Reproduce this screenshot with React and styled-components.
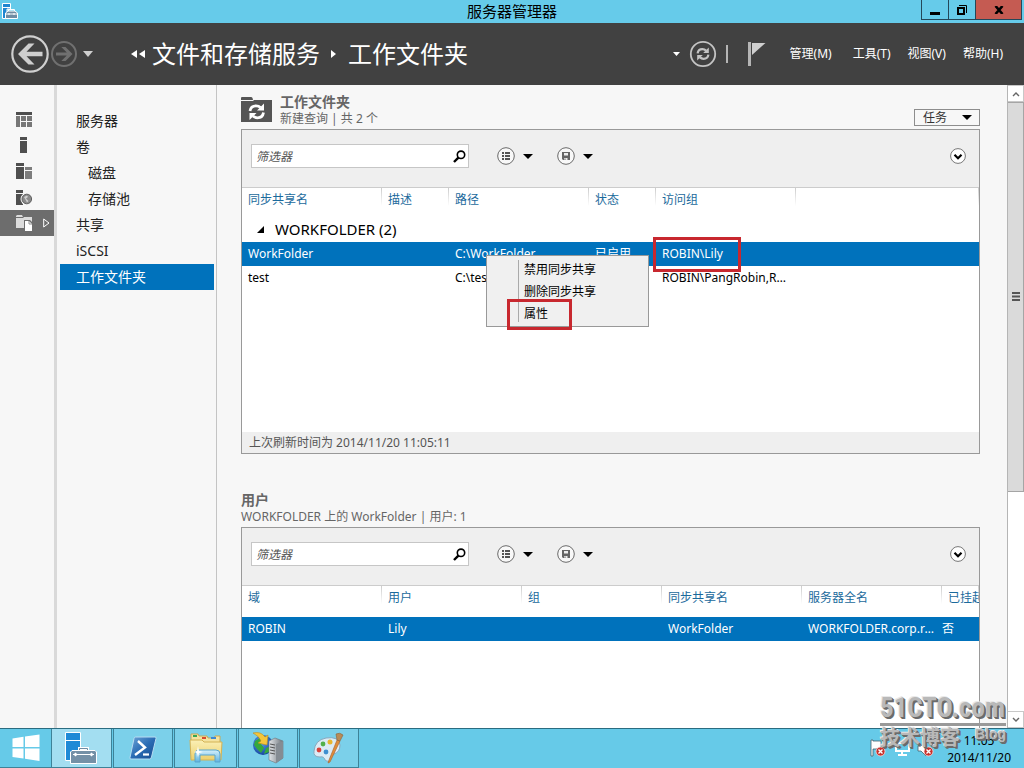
import React from 'react'
import styled, { createGlobalStyle, css } from 'styled-components';

const navItems = [
  { label: '服务器' },
  { label: '卷' },
  { label: '磁盘', sub: true },
  { label: '存储池', sub: true },
  { label: '共享' },
  { label: 'iSCSI' },
  { label: '工作文件夹', active: true },
];

const shareColumns = [
  { title: '同步共享名', width: 140 },
  { title: '描述', width: 67 },
  { title: '路径', width: 140 },
  { title: '状态', width: 67 },
  { title: '访问组', width: 140 },
  { title: '' },
];

const shares = [
  { name: 'WorkFolder', desc: '', path: 'C:\\WorkFolder', state: '已启用', group: 'ROBIN\\Lily', selected: true },
  { name: 'test', desc: '', path: 'C:\\test', state: '已启用', group: 'ROBIN\\PangRobin,ROBIN\\Lily' },
];

const userColumns = [
  { title: '域', width: 140 },
  { title: '用户', width: 140 },
  { title: '组', width: 140 },
  { title: '同步共享名', width: 140 },
  { title: '服务器全名', width: 140 },
  { title: '已挂起' },
];

const users = [
  { domain: 'ROBIN', user: 'Lily', group: '', share: 'WorkFolder', server: 'WORKFOLDER.corp.robin.com', suspended: '否' },
];

const ServerManagerIcon = () => (
  <svg width="16" height="16" viewBox="0 0 16 16" aria-hidden="true">
    <path d="M0.5 0.5H8.5V6H5V15.5H0.5z" fill="#1f86d0" stroke="#fff" />
    <path d="M1 4.5H8" stroke="#fff" />
    <path d="M6.5 8V6.5H12.5V8" fill="none" stroke="#fff" />
    <path d="M6 8H13L15.5 10V15.5H3.5V10z" fill="#6f8ca3" stroke="#fff" />
    <path d="M4 11H15M7 10V12M12 10V12" stroke="#fff" fill="none" />
  </svg>
)

const ServerManagerLargeIcon = () => (
  <svg width="33" height="33" viewBox="0 0 33 33">
    <path d="M0.5 0.5H15.5V28.5H0.5z" fill="#1f8ad6" stroke="#fff" />
    <path d="M1 8.5H15" stroke="#fff" />
    <path d="M14.5 18V16.5H22.5V18" fill="none" stroke="#fff" strokeWidth="3" />
    <path d="M14.5 19V16.5H22.5V19" fill="none" stroke="#6f8ca3" />
    <path d="M7 18.5H30L31.5 20V31.5H5.5V20z" fill="#7490a6" stroke="#fff" />
    <path d="M8 22.5H29" stroke="#fff" />
    <path d="M8.5 22.5L10.5 20.5L12.5 22.5L10.5 24.5zM24.5 22.5L26.5 20.5L28.5 22.5L26.5 24.5z" fill="#fff" />
  </svg>
)

const BackIcon = () => (
  <svg width="40" height="40" viewBox="0 0 40 40">
    <circle cx="20" cy="20" r="17.7" fill="none" stroke="#cfcfcf" strokeWidth="2.2" />
    <path d="M8 20L18.5 9.5H24.5L16.5 17.8H32.5V22.2H16.5L24.5 30.5H18.5z" fill="#cfcfcf" />
  </svg>
)

const ForwardIcon = () => (
  <svg width="28" height="28" viewBox="0 0 28 28">
    <circle cx="14" cy="14" r="12" fill="none" stroke="#707070" strokeWidth="2" />
    <path d="M22.5 14L15.5 7H11.3L16.8 12.5H6V15.5H16.8L11.3 21H15.5z" fill="#707070" />
  </svg>
)

const Caret = ({ width = 10, height = 5, color = '#000' }) => (
  <svg width={width} height={height} viewBox="0 0 10 5" preserveAspectRatio="none" aria-hidden="true">
    <path d="M0 0H10L5 5z" fill={color} />
  </svg>
)

const SyncArrows = ({ color }) => (
  <g fill="none" stroke={color} strokeWidth="2.2">
    <path d="M1.6 6.4Q2.2 2.2 6.4 2.2Q8.6 2.2 10 3.6" />
    <path d="M12.4 7.6Q11.8 11.8 7.6 11.8Q5.4 11.8 4 10.4" />
    <path d="M12.8 0.4V6H7.2z" fill={color} stroke="none" />
    <path d="M1.2 13.6V8H6.8z" fill={color} stroke="none" />
  </g>
)

const RefreshIcon = () => (
  <svg width="28" height="28" viewBox="0 0 28 28">
    <circle cx="14" cy="14" r="12.2" fill="none" stroke="#c4c4c4" strokeWidth="1.8" />
    <g transform="translate(7 7)"><SyncArrows color="#c4c4c4" /></g>
  </svg>
)

const FlagIcon = () => (
  <svg width="18" height="24" viewBox="0 0 18 24">
    <path d="M0 0H3V24H0z" fill="#b5b5b5" />
    <path d="M4 1H17.5L4 13z" fill="#cfcfcf" />
  </svg>
)

const FolderSyncIcon = () => (
  <svg width="31" height="25" viewBox="0 0 31 25" aria-hidden="true">
    <path d="M0 3V1Q0 0 1 0H10Q11 0 11.5 1L12 3z" fill="#555" />
    <path d="M0 4H12L13 3H31V25H0z" fill="#555" />
    <g transform="translate(7 6) scale(1.25)"><SyncArrows color="#fff" /></g>
  </svg>
)

const SearchIcon = () => (
  <svg width="13" height="13" viewBox="0 0 13 13">
    <circle cx="8" cy="4.8" r="3.7" fill="none" stroke="#000" strokeWidth="1.6" />
    <path d="M5.4 7.6L1 12" stroke="#000" strokeWidth="2.4" />
  </svg>
)

const ListIcon = () => (
  <svg width="18" height="18" viewBox="0 0 18 18">
    <circle cx="9" cy="9" r="8.3" fill="#f8f8f8" stroke="#6a6a6a" />
    <path d="M5 6H7M5 9H7M5 12H7M8 6H13M8 9H13M8 12H13" stroke="#555" strokeWidth="2" />
  </svg>
)

const SaveIcon = () => (
  <svg width="18" height="18" viewBox="0 0 18 18">
    <circle cx="9" cy="9" r="8.3" fill="#f8f8f8" stroke="#6a6a6a" />
    <path d="M5 5H13V13H6L5 12z" fill="#666" />
    <path d="M7 6H11V8.5H7z" fill="#eee" />
    <path d="M7 11H10.5V13H7z" fill="#eee" />
    <path d="M8 11.5V13" stroke="#666" />
  </svg>
)

const ExpandIcon = () => (
  <svg width="16" height="16" viewBox="0 0 16 16">
    <circle cx="8" cy="8" r="7.4" fill="#fff" stroke="#777" />
    <path d="M4.5 6.8L8 10.2L11.5 6.8" fill="none" stroke="#000" strokeWidth="2.2" />
  </svg>
)

const DashboardIcon = () => (
  <svg width="16" height="15" viewBox="0 0 16 15">
    <path d="M0 0H16V3H0z" fill="#4f4f4f" />
    <path d="M0 4H4V15H0zM5 4H10V9H5zM11 4H16V9H11zM5 10H10V15H5zM11 10H16V15H11z" fill="#777" />
  </svg>
)

const LocalServerIcon = () => (
  <svg width="16" height="16" viewBox="0 0 16 16">
    <path d="M4 0H11V3H4zM4 4H11V16H4z" fill="#4f4f4f" />
  </svg>
)

const AllServersIcon = () => (
  <svg width="16" height="16" viewBox="0 0 16 16">
    <path d="M0 0H8V3H0zM0 4H8V16H0z" fill="#4f4f4f" />
    <path d="M9 4H16V7H9zM9 8H16V16H9z" fill="#7d7d7d" />
  </svg>
)

const WebServerIcon = () => (
  <svg width="16" height="15" viewBox="0 0 16 15">
    <path d="M0 0H7V3H0zM0 4H7V15H0z" fill="#4f4f4f" />
    <circle cx="10.5" cy="9" r="6" fill="#f7f7f7" />
    <circle cx="10.8" cy="9" r="4.8" fill="#8b8b8b" stroke="#606060" />
    <path d="M8 7L11 5.5L12 7L10 8.5L12.5 11L11 12.5L10 10.5z" fill="#cfcfcf" />
  </svg>
)

const StorageIcon = () => (
  <svg width="16" height="16" viewBox="0 0 16 16">
    <path d="M0 2V1L1 0H6L7 2zM0 3H7L8 2H16V13H0z" fill="#dcdcdc" />
    <path d="M8 5H14L17 8V17H8z" fill="#6d6d6d" />
    <path d="M9 6H13L16 9V16H9z" fill="#fff" />
    <path d="M13 6V9H16" fill="none" stroke="#8c8c8c" />
  </svg>
)

const WindowsIcon = () => (
  <svg width="28" height="28" viewBox="0 0 28 28">
    <path d="M0.5 4.5L11.5 2.8V13H0.5zM13 2.6L27.5 0.5V13H13zM0.5 14.5H11.5V24.5L0.5 23zM13 14.5H27.5V27L13 24.8z" fill="#fff" />
  </svg>
)

const PowerShellIcon = () => (
  <svg width="28" height="24" viewBox="0 0 28 24">
    <defs>
      <linearGradient id="ps" x1="0" y1="0" x2="1" y2="1">
        <stop offset="0" stopColor="#6fa5d8" />
        <stop offset="0.5" stopColor="#2a6cb4" />
        <stop offset="1" stopColor="#174a8c" />
      </linearGradient>
    </defs>
    <path d="M6.5 1H26Q27.5 1 27 2.5L22.5 21Q22 23 20.5 23H2Q0.5 23 1 21.5L5 2.5Q5.3 1 6.5 1z" fill="url(#ps)" stroke="#b8dcf2" />
    <path d="M9 5L16 11.5L6 19" fill="none" stroke="#fff" strokeWidth="2.4" />
    <path d="M14 18.5H20" stroke="#fff" strokeWidth="2.2" />
  </svg>
)

const ExplorerIcon = () => (
  <svg width="34" height="30" viewBox="0 0 34 30">
    <defs>
      <linearGradient id="fold" x1="0" y1="0" x2="0" y2="1">
        <stop offset="0" stopColor="#fbf0b6" />
        <stop offset="1" stopColor="#ecd06e" />
      </linearGradient>
      <linearGradient id="stand" x1="0" y1="0" x2="0" y2="1">
        <stop offset="0" stopColor="#d6f0fb" />
        <stop offset="1" stopColor="#5fb4e0" />
      </linearGradient>
    </defs>
    <path d="M2 1H9L10 3H18L19 5H25L26 3H31V12H2z" fill="#f4e3a0" stroke="#c8a957" />
    <path d="M4 2H8V4H4z" fill="#35a853" />
    <path d="M13 4H17V6H13z" fill="#d84a2f" />
    <path d="M22 4H27V6H22z" fill="#4088d0" />
    <path d="M1 7H13L15 9H33L32 27H2z" fill="url(#fold)" stroke="#d4b255" />
    <path d="M6 29V21Q6 17 10 17H27Q31 17 31 21V29H26V22H11V29z" fill="url(#stand)" stroke="#5aa5cc" />
    <path d="M9 13L10 18L14 19L10 20L9 24L8 20L5 19L8 18z" fill="#fff" />
  </svg>
)

const IisIcon = () => (
  <svg width="32" height="32" viewBox="0 0 32 32">
    <defs>
      <radialGradient id="globe" cx="0.4" cy="0.35" r="0.7">
        <stop offset="0" stopColor="#5aa4ee" />
        <stop offset="1" stopColor="#123f9c" />
      </radialGradient>
      <linearGradient id="tower" x1="0" y1="0" x2="1" y2="0">
        <stop offset="0" stopColor="#e2e5e8" />
        <stop offset="1" stopColor="#6e757c" />
      </linearGradient>
    </defs>
    <circle cx="11" cy="13" r="10" fill="url(#globe)" />
    <path d="M3 9L8 6L12 9L9 12L12 16L9 21L5 17L2 13zM14 16L19 14L17 20L12 22z" fill="#35a83e" />
    <path d="M1 1Q9 -1 13 5L16 3L15 13L6 11L9 9Q7 4 1 1z" fill="#f5c63c" stroke="#c28d16" strokeWidth="0.6" />
    <path d="M17 9L23 6L31 9V26L24 31L17 28z" fill="url(#tower)" stroke="#6c7379" strokeWidth="0.6" />
    <path d="M24 12L31 9V26L24 31z" fill="#858c93" />
    <path d="M18 12L23 13M18 15L23 16M18 18L23 19M18 21L23 22" stroke="#555" />
  </svg>
)

const PaintIcon = () => (
  <svg width="34" height="32" viewBox="0 0 34 32">
    <path d="M2 19Q3 8 14 6Q27 4 28 13Q28 20 22 22Q18 23 19 27Q17 31 13 28Q12 24 8 25Q1 25 2 19z" fill="#dcebf5" stroke="#8aa9be" />
    <circle cx="7" cy="18" r="2.4" fill="#d9423a" />
    <circle cx="11" cy="12" r="2.4" fill="#52b04b" />
    <circle cx="18" cy="10" r="2.5" fill="#e8b62e" />
    <circle cx="14" cy="20" r="2.4" fill="#3f8fd0" />
    <path d="M28 9L18 30L16 31L17 28L25 8z" fill="#e08c3a" stroke="#a8622a" strokeWidth="0.6" />
    <path d="M24 2Q28 0 31 3L28 9L25 8z" fill="#b98b57" stroke="#8a6238" strokeWidth="0.6" />
  </svg>
)

const TrayIcons = () => (
  <svg width="66" height="20" viewBox="0 0 66 20" aria-hidden="true">
    <path d="M1 1V17H3V10H11V2H3V1z" fill="#fff" stroke="#46606c" strokeWidth="0.8" />
    <path d="M26 4H39V12H26zM32 12V15M28 16H37" fill="#66cae8" stroke="#fff" strokeWidth="2" />
    <path d="M48 7H51L56 2V17L51 12H48z" fill="#fff" stroke="#46606c" strokeWidth="0.8" />
    {[10.5, 58.5].map(x => (
      <g key={x}>
        <circle cx={x} cy="12.5" r="4.5" fill="#c9302c" stroke="#f5dada" strokeWidth="0.8" />
        <path d={`M${x - 2} 10.5L${x + 2} 14.5M${x + 2} 10.5L${x - 2} 14.5`} stroke="#fff" strokeWidth="1.4" />
      </g>
    ))}
  </svg>
)

const railItems = [
  { label: '仪表板', Icon: DashboardIcon },
  { label: '本地服务器', Icon: LocalServerIcon },
  { label: '所有服务器', Icon: AllServersIcon },
  { label: 'IIS', Icon: WebServerIcon },
  { label: '文件和存储服务', Icon: StorageIcon, active: true },
];

const Toolbar = ({ id }) => (
  <ToolbarRow>
    <FilterBox>
      <FilterInput id={id} aria-label="筛选器" placeholder="筛选器" />
      <IconButton aria-label="搜索"><SearchIcon /></IconButton>
    </FilterBox>
    <DropButton aria-label="查询"><ListIcon /><Caret /></DropButton>
    <DropButton aria-label="保存"><SaveIcon /><Caret /></DropButton>
    <Spacer />
    <IconButton aria-label="展开"><ExpandIcon /></IconButton>
  </ToolbarRow>
)

const TableHead = ({ columns }) => (
  <>
    <colgroup>
      {columns.map(col => <Col key={col.title} $width={col.width} />)}
    </colgroup>
    <thead>
      <tr>
        {columns.map(col => <Th key={col.title} scope="col">{col.title}</Th>)}
      </tr>
    </thead>
  </>
)

const ShareTable = () => (
  <Table>
    <TableHead columns={shareColumns} />
    <tbody>
      <tr>
        <GroupCell colSpan={shareColumns.length}>
          <GroupLabel>
            <svg width="7" height="7" viewBox="0 0 7 7" aria-hidden="true"><path d="M7 0V7H0z" /></svg>
            WORKFOLDER (2)
          </GroupLabel>
        </GroupCell>
      </tr>
      {shares.map(share => (
        <Row key={share.name} $selected={share.selected}>
          <Td>{share.name}</Td>
          <Td>{share.desc}</Td>
          <Td>{share.path}</Td>
          <Td>{share.state}</Td>
          <Td>
            {share.group}
            {share.selected && <GroupMark />}
          </Td>
          <Td />
        </Row>
      ))}
    </tbody>
  </Table>
)

const UserTable = () => (
  <Table>
    <TableHead columns={userColumns} />
    <tbody>
      {users.map(item => (
        <Row key={item.user} $selected>
          <Td>{item.domain}</Td>
          <Td>{item.user}</Td>
          <Td>{item.group}</Td>
          <Td>{item.share}</Td>
          <Td>{item.server}</Td>
          <Td $flush>{item.suspended}</Td>
        </Row>
      ))}
    </tbody>
  </Table>
)

const App = () => {
  return (
    <>
      <GlobalStyle />
      <Screen>
        <TitleBar>
          <TitleIcon><ServerManagerIcon /></TitleIcon>
          <Title>服务器管理器</Title>
          <WindowButtons>
            <WindowButton aria-label="最小化">
              <svg width="10" height="13" viewBox="0 0 10 13"><path d="M0 9H10V12H0z" /></svg>
            </WindowButton>
            <WindowButton aria-label="还原">
              <svg width="10" height="10" viewBox="0 0 10 10">
                <path d="M1 3H7V9H1z" fill="none" stroke="#000" strokeWidth="2" />
                <path d="M2 0.5H9.5V8" fill="none" stroke="#000" />
              </svg>
            </WindowButton>
            <WindowButton aria-label="关闭" $close>
              <svg width="10" height="8" viewBox="0 0 10 8">
                <path d="M1.5 0L8.5 8M8.5 0L1.5 8" stroke="#000" strokeWidth="2.6" />
              </svg>
            </WindowButton>
          </WindowButtons>
        </TitleBar>

        <Header>
          <IconButton aria-label="后退"><BackIcon /></IconButton>
          <IconButton aria-label="前进"><ForwardIcon /></IconButton>
          <HistoryButton aria-label="历史记录"><Caret height={6} color="#cfcfcf" /></HistoryButton>
          <Breadcrumb aria-label="位置">
            <svg width="14" height="8" viewBox="0 0 14 8" aria-hidden="true"><path d="M6 0V8L0 4zM14 0V8L8 4z" fill="#fff" /></svg>
            <Crumb href="#storage">文件和存储服务</Crumb>
            <CrumbArrow width="5" height="8" viewBox="0 0 5 8" aria-hidden="true"><path d="M0 0V8L5 4z" fill="#fff" /></CrumbArrow>
            <Crumb href="#workfolders">工作文件夹</Crumb>
          </Breadcrumb>
          <HeaderTools>
            <IconButton aria-label="更多"><Caret width={7} height={4} color="#fff" /></IconButton>
            <IconButton aria-label="刷新"><RefreshIcon /></IconButton>
            <Divider />
            <IconButton aria-label="通知"><FlagIcon /></IconButton>
          </HeaderTools>
          <Menu>
            <MenuButton $wide>管理(M)</MenuButton>
            <MenuButton>工具(T)</MenuButton>
            <MenuButton>视图(V)</MenuButton>
            <MenuButton>帮助(H)</MenuButton>
          </Menu>
        </Header>

        <Body>
          <Rail>
            {railItems.map(({ label, Icon, active }) => (
              <RailButton key={label} aria-label={label} $active={active}>
                <Icon />
                {active && (
                  <svg width="7" height="10" viewBox="0 0 7 10"><path d="M0.7 1L6 5L0.7 9z" fill="none" stroke="#fff" /></svg>
                )}
              </RailButton>
            ))}
          </Rail>
          <Nav>
            {navItems.map(item => (
              <NavLink key={item.label} href={`#${item.label}`} $sub={item.sub} $active={item.active}>
                {item.label}
              </NavLink>
            ))}
          </Nav>

          <Main>
            <Section>
              <SectionHeader>
                <FolderSyncIcon />
                <SectionTitles>
                  <SectionTitle>工作文件夹</SectionTitle>
                  <SectionNote>新建查询 | 共 2 个</SectionNote>
                </SectionTitles>
                <TaskButton>任务<Caret /></TaskButton>
              </SectionHeader>
              <Panel>
                <Toolbar id="share-filter" />
                <ShareArea><ShareTable /></ShareArea>
                <PanelFooter>上次刷新时间为 2014/11/20 11:05:11</PanelFooter>
                <ContextMenu role="menu">
                  <ContextItem role="menuitem">禁用同步共享</ContextItem>
                  <ContextItem role="menuitem">删除同步共享</ContextItem>
                  <ContextItem role="menuitem">属性<ItemMark /></ContextItem>
                </ContextMenu>
              </Panel>
            </Section>

            <Section $fill>
              <SectionHeader>
                <SectionTitles>
                  <SectionTitle>用户</SectionTitle>
                  <SectionNote>WORKFOLDER 上的 WorkFolder | 用户: 1</SectionNote>
                </SectionTitles>
              </SectionHeader>
              <Panel $fill>
                <Toolbar id="user-filter" />
                <UserTable />
              </Panel>
            </Section>
          </Main>

          <ScrollBar>
            <ScrollButton aria-label="向上滚动">
              <svg width="8" height="6" viewBox="0 0 8 6"><path d="M1 5L4 2L7 5" fill="none" stroke="#666" strokeWidth="1.4" /></svg>
            </ScrollButton>
            <ScrollTrack>
              <ScrollThumb>
                <svg width="8" height="9" viewBox="0 0 8 9"><path d="M0 1H8M0 4.5H8M0 8H8" stroke="#555" strokeWidth="2" /></svg>
              </ScrollThumb>
            </ScrollTrack>
            <ScrollButton aria-label="向下滚动">
              <svg width="8" height="6" viewBox="0 0 8 6"><path d="M1 1L4 4L7 1" fill="none" stroke="#666" strokeWidth="1.4" /></svg>
            </ScrollButton>
          </ScrollBar>
        </Body>

        <TaskBar>
          <TaskBarButton aria-label="开始" $width={51} $plain><WindowsIcon /></TaskBarButton>
          <TaskBarButton aria-label="服务器管理器" $width={61} $active><ServerManagerLargeIcon /></TaskBarButton>
          <TaskBarButton aria-label="PowerShell" $width={60}><PowerShellIcon /></TaskBarButton>
          <TaskBarButton aria-label="文件资源管理器" $width={63}><ExplorerIcon /></TaskBarButton>
          <TaskBarButton aria-label="IIS" $width={60}><IisIcon /></TaskBarButton>
          <TaskBarButton aria-label="画图" $width={60}><PaintIcon /></TaskBarButton>
          <Spacer />
          <TrayIcons />
          <Clock>
            <span>11:05</span>
            <span>2014/11/20</span>
          </Clock>
        </TaskBar>

        <Watermark>
          <WatermarkName>51CTO.com</WatermarkName>
          <WatermarkNote>
            <span>技术博客</span>
            <WatermarkBlog>Blog</WatermarkBlog>
          </WatermarkNote>
        </Watermark>
      </Screen>
    </>
  )
}

export default App;

const GlobalStyle = createGlobalStyle`
  * {
    box-sizing: border-box;
  }

  body {
    margin: 0;
    overflow: hidden;
  }

  body, button, input {
    font-family: "Noto Sans", "Noto Sans CJK SC", sans-serif;
    font-size: 12px;
  }

  button {
    padding: 0;
    border: 0;
    background: none;
    color: inherit;
  }

  svg {
    display: block;
    flex: none;
  }
`;

const Screen = styled.div`
  position: relative;
  display: flex;
  flex-direction: column;
  height: 100vh;
  background: #f7f7f7;
`;

const Spacer = styled.div`
  flex: 1;
`;

const TitleBar = styled.header`
  display: grid;
  grid-template-columns: 1fr auto 1fr;
  height: 23px;
  background: #66cbea;
`;

const TitleIcon = styled.div`
  padding: 3px 2px;
`;

const Title = styled.h1`
  margin: 0;
  font-size: 15px;
  font-weight: 400;
  line-height: 22px;
`;

const WindowButtons = styled.div`
  display: flex;
  justify-content: flex-end;
  align-items: flex-start;
  padding-right: 2px;
`;

const WindowButton = styled.button`
  display: flex;
  align-items: center;
  justify-content: center;
  width: ${({ $close }) => ($close ? 47 : 27)}px;
  height: 20px;
  border: 1px solid #24485a;
  border-top: 0;
  border-right-width: ${({ $close }) => ($close ? 1 : 0)}px;
  background: ${({ $close }) => ($close ? '#c55b52' : 'transparent')};
`;

const Header = styled.div`
  display: flex;
  align-items: center;
  height: 62px;
  padding: 0 21px 0 10px;
  background: #414141;
  color: #fff;
`;

const IconButton = styled.button`
  display: flex;
  align-items: center;
  justify-content: center;
`;

const HistoryButton = styled(IconButton)`
  margin: 0 38px 0 5px;
`;

const Breadcrumb = styled.nav`
  display: flex;
  align-items: center;
  flex: 1;
  gap: 7px;
`;

const Crumb = styled.a`
  color: #fff;
  font-size: 24px;
  line-height: 32px;
  text-decoration: none;
  white-space: nowrap;
`;

const CrumbArrow = styled.svg`
  margin: 0 5px 0 4px;
`;

const HeaderTools = styled.div`
  display: flex;
  align-items: center;
  gap: 9px;
  margin-right: 24px;
`;

const Divider = styled.div`
  width: 2px;
  height: 18px;
  margin-right: 11px;
  background: #b5b5b5;
`;

const Menu = styled.div`
  display: flex;
  gap: 17px;
`;

const MenuButton = styled.button`
  margin-right: ${({ $wide }) => ($wide ? 4 : 0)}px;
  line-height: 20px;
  white-space: nowrap;
`;

const Body = styled.div`
  display: flex;
  flex: 1;
  min-height: 0;
`;

const Rail = styled.nav`
  width: 57px;
  padding-top: 21px;
  border-right: 3px solid #d9d9d9;
`;

const RailButton = styled.button`
  display: flex;
  align-items: center;
  gap: 11px;
  width: 100%;
  height: 26px;
  padding-left: 16px;
  background: ${({ $active }) => ($active ? '#6d6d6d' : 'transparent')};
`;

const Nav = styled.nav`
  width: 160px;
  padding: 23px 2px 0 3px;
  border-right: 1px solid #c4c4c4;
`;

const NavLink = styled.a`
  display: block;
  padding-left: ${({ $sub }) => ($sub ? 28 : 16)}px;
  background: ${({ $active }) => ($active ? '#0072bc' : 'transparent')};
  color: ${({ $active }) => ($active ? '#fff' : '#222')};
  font-size: 14px;
  line-height: 26px;
  text-decoration: none;
`;

const Main = styled.main`
  display: flex;
  flex-direction: column;
  flex: 1;
  gap: 38px;
  min-width: 0;
  padding: 9px 27px 0 24px;
  overflow: hidden;
`;

const Section = styled.section`
  display: flex;
  flex-direction: column;
  flex: ${({ $fill }) => ($fill ? '1' : 'none')};
`;

const SectionHeader = styled.div`
  display: flex;
  align-items: flex-end;
  gap: 8px;
  padding-bottom: 1px;

  > svg {
    margin-bottom: 6px;
  }
`;

const SectionTitles = styled.div`
  flex: 1;
  color: #666;
`;

const SectionTitle = styled.h2`
  margin: 0;
  font-size: 14px;
  font-weight: 700;
  line-height: 16px;
`;

const SectionNote = styled.p`
  margin: 0;
  line-height: 18px;
`;

const TaskButton = styled.button`
  display: flex;
  align-items: center;
  justify-content: space-between;
  width: 66px;
  height: 17px;
  margin-bottom: 2px;
  padding: 0 7px 0 8px;
  border: 1px solid #8d8d8d;
  color: #333;
  line-height: 15px;
`;

const Panel = styled.div`
  position: relative;
  border: 1px solid #999;
  background: #fff;
  ${({ $fill }) => $fill && css`
    flex: 1;
    border-bottom: 0;
  `}
`;

const ToolbarRow = styled.div`
  display: flex;
  align-items: center;
  padding: 14px 13px 19px 9px;
  border-bottom: 1px solid #ccc;
  background: #efefef;
`;

const FilterBox = styled.div`
  display: flex;
  align-items: center;
  width: 218px;
  height: 24px;
  margin-right: 28px;
  padding-right: 2px;
  border: 1px solid #c6c6c6;
  background: #fff;
`;

const FilterInput = styled.input`
  flex: 1;
  min-width: 0;
  padding: 0 4px;
  border: 0;
  outline: 0;
  background: none;
  font-style: italic;

  &::placeholder {
    color: #555;
  }
`;

const DropButton = styled(IconButton)`
  gap: 8px;
  margin-right: 24px;
`;

const ShareArea = styled.div`
  height: 244px;
`;

const Table = styled.table`
  width: 100%;
  border-collapse: collapse;
  table-layout: fixed;
  text-align: left;
`;

const Col = styled.col`
  width: ${({ $width }) => ($width ? `${$width}px` : 'auto')};
`;

const Th = styled.th`
  height: 31px;
  padding: 3px 0 0 6px;
  overflow: hidden;
  background: linear-gradient(#ccc, #fff) right top / 1px 18px no-repeat;
  color: #1b6a9c;
  font-weight: 400;
  line-height: 18px;
  vertical-align: top;
  white-space: nowrap;
`;

const GroupCell = styled.td`
  height: 23px;
  padding: 0 0 3px 15px;
`;

const GroupLabel = styled.div`
  display: flex;
  align-items: center;
  gap: 11px;
  font-size: 15px;
  line-height: 20px;
`;

const Row = styled.tr`
  background: ${({ $selected }) => ($selected ? '#0072bc' : '#fff')};
  color: ${({ $selected }) => ($selected ? '#fff' : '#000')};
`;

const Td = styled.td`
  position: relative;
  height: 24px;
  padding: 0 4px 0 ${({ $flush }) => ($flush ? 0 : 6)}px;
  overflow: hidden;
  line-height: 24px;
  text-overflow: ellipsis;
  white-space: nowrap;

  &:has(span) {
    overflow: visible;
  }
`;

const markStyle = css`
  position: absolute;
  border: 3px solid #c8282f;
  pointer-events: none;
`;

const GroupMark = styled.span`
  ${markStyle}
  top: -5px;
  left: -3px;
  z-index: 1;
  width: 88px;
  height: 35px;
`;

const ItemMark = styled.span`
  ${markStyle}
  top: -4px;
  left: 20px;
  width: 65px;
  height: 31px;
`;

const PanelFooter = styled.div`
  padding: 0 7px;
  background: #efefef;
  color: #555;
  line-height: 21px;
`;

const ContextMenu = styled.div`
  position: absolute;
  top: 125px;
  left: 244px;
  width: 163px;
  padding: 3px 0 1px;
  border: 1px solid #999;
  background: linear-gradient(#aaa, #aaa) 31px 4px / 1px 62px no-repeat #f0f0f0;
`;

const ContextItem = styled.button`
  position: relative;
  display: block;
  width: 100%;
  padding-left: 37px;
  line-height: 22px;
  text-align: left;
`;

const ScrollBar = styled.div`
  display: flex;
  flex-direction: column;
  width: 17px;
  border-left: 1px solid #b5b5b5;
  background: #fff;
`;

const ScrollButton = styled(IconButton)`
  height: 17px;
  border: 1px solid #c8c8c8;
  border-left: 0;
`;

const ScrollTrack = styled.div`
  flex: 1;
`;

const ScrollThumb = styled.div`
  display: flex;
  align-items: center;
  justify-content: center;
  height: 64%;
  border: 1px solid #a5a5a5;
  border-left: 0;
  background: #dadada;
`;

const TaskBar = styled.footer`
  display: flex;
  align-items: center;
  height: 40px;
  padding-right: 13px;
  border-top: 1px solid #2b6c80;
  background: #66cae8;
`;

const TaskBarButton = styled.button`
  display: flex;
  align-items: center;
  justify-content: center;
  width: ${({ $width }) => $width}px;
  height: 39px;
  margin-right: ${({ $plain }) => ($plain ? 0 : 1)}px;
  border: 1px solid #3d8298;
  border-top: 0;
  border-left-width: ${({ $plain }) => ($plain ? 0 : 1)}px;
  border-right-width: ${({ $plain }) => ($plain ? 0 : 1)}px;
  background: ${({ $active, $plain }) => ($active ? '#a3def1' : $plain ? 'transparent' : '#7bd0ea')};
`;

const Clock = styled.time`
  display: flex;
  flex-direction: column;
  align-items: center;
  margin-left: 11px;
  line-height: 17px;
`;

const Watermark = styled.div`
  position: absolute;
  right: 18px;
  bottom: 18px;
  width: 126px;
  color: #b9b9b9;
  text-shadow: 1px 1px 0 #6b6b6b, 2px 2px 0 #6b6b6b, -1px -1px 0 #e8e8e8;
  pointer-events: none;
`;

const WatermarkName = styled.div`
  border-bottom: 3px solid #999;
  font-family: "Roboto Condensed", Roboto, sans-serif;
  font-size: 27px;
  font-weight: 700;
  line-height: 29px;
`;

const WatermarkNote = styled.div`
  display: flex;
  justify-content: space-between;
  font-size: 20px;
  font-weight: 700;
  line-height: 24px;
`;

const WatermarkBlog = styled.span`
  font-family: "Liberation Sans", sans-serif;
  font-size: 14px;
  line-height: 16px;
`;
